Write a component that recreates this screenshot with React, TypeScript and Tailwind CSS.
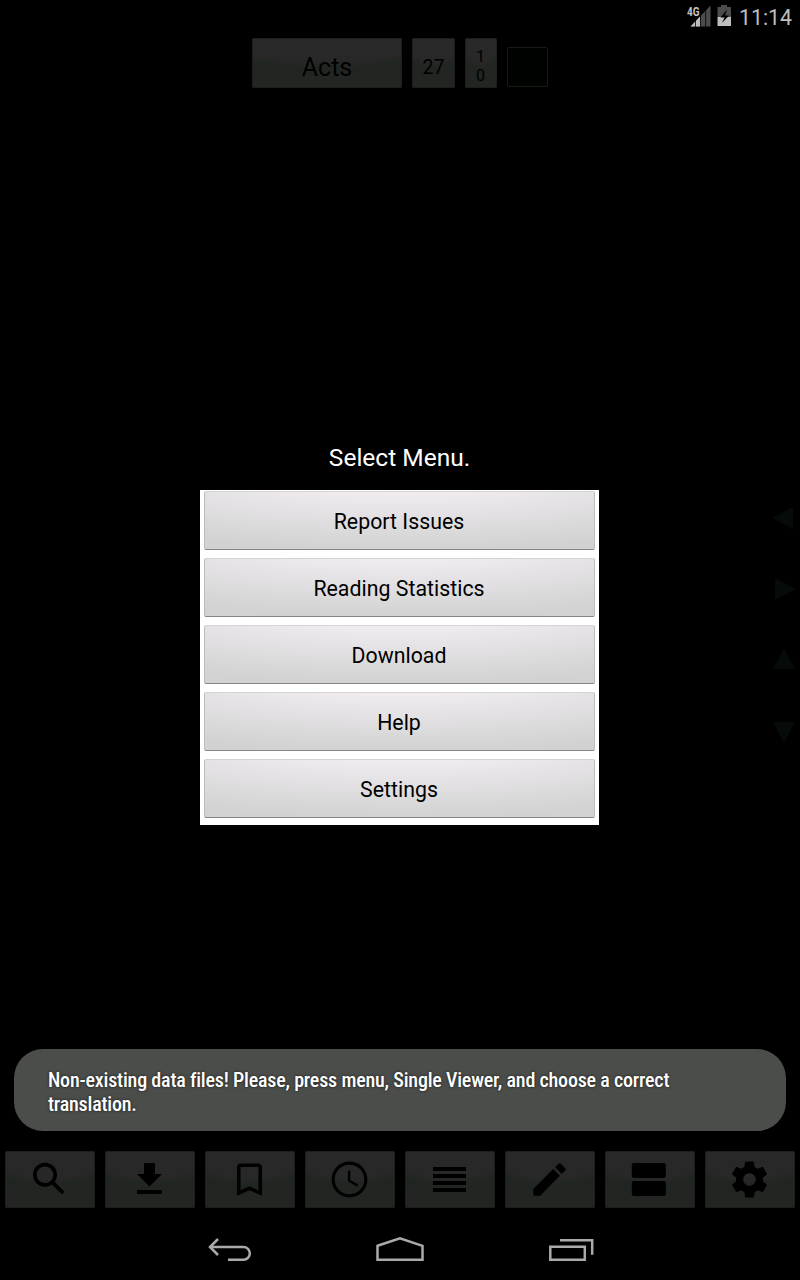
import type { ReactNode } from "react";

const menu = ["Report Issues", "Reading Statistics", "Download", "Help", "Settings"];

function DimTile({ className, children }: { className: string; children: ReactNode }) {
  return (
    <div
      className={`flex rounded-[1px] border border-[#1d1f1d] bg-[radial-gradient(ellipse_105%_100%_at_50%_-35%,#282828_0%,#282828_82%,#212621_94%,#222522_112%)] text-black ${className}`}
    >
      {children}
    </div>
  );
}

function Glyph({ d }: { d: string }) {
  return (
    <svg viewBox="0 0 24 24" className="size-[43px] fill-black">
      <path d={d} />
    </svg>
  );
}

const tools: ReactNode[] = [
  <svg viewBox="0 0 43 43" className="size-[43px]">
    <circle cx="17" cy="16.800" r="10.200" fill="none" stroke="#000" strokeWidth="3.700" />
    <path d="M24.300 24.100 35.200 35" stroke="#000" strokeWidth="3.800" />
  </svg>,
  <svg viewBox="0 0 43 43" className="size-[43px]">
    <path d="M16 5h11v11h7L21.500 28.500 9 16h7zM9 32h25v4H9z" />
  </svg>,
  <Glyph d="M17 3H7c-1.100 0-2 .9-2 2v16l7-3 7 3V5c0-1.100-.9-2-2-2zm0 15l-5-2.180L7 18V5h10v13z" />,
  <Glyph d="M11.990 2C6.470 2 2 6.480 2 12s4.470 10 9.990 10C17.520 22 22 17.520 22 12S17.520 2 11.990 2zM12 20.300c-4.600 0-8.300-3.700-8.300-8.300S7.400 3.700 12 3.700s8.300 3.700 8.300 8.300-3.700 8.300-8.300 8.300zM12.500 7H11.100v6l5.100 3 .7-1.150-4.400-2.600z" />,
  <svg viewBox="0 0 43 43" className="size-[43px]">
    <path d="M5 9h33v4H5zM5 16h33v4H5zM5 23h33v4H5zM5 30h33v4H5z" />
  </svg>,
  <Glyph d="M3 17.250V21h3.750L17.810 9.940l-3.750-3.750L3 17.250zM20.710 7.040c.39-.39.39-1.020 0-1.410l-2.340-2.340c-.39-.39-1.020-.39-1.410 0l-1.830 1.830 3.750 3.750 1.830-1.830z" />,
  <svg viewBox="0 0 43 43" className="size-[43px]">
    <rect x="3.800" y="5" width="34" height="15" rx="2" />
    <rect x="3.800" y="23" width="34" height="15" rx="2" />
  </svg>,
  <Glyph d="M19.430 12.980c.04-.32.07-.64.07-.98s-.03-.66-.07-.98l2.110-1.650c.19-.15.24-.42.12-.64l-2-3.460c-.12-.22-.39-.3-.61-.22l-2.490 1c-.52-.4-1.080-.73-1.690-.98l-.38-2.650C14.460 2.180 14.250 2 14 2h-4c-.25 0-.46.18-.49.42l-.38 2.650c-.61.25-1.170.59-1.690.98l-2.490-1c-.23-.09-.49 0-.61.22l-2 3.460c-.13.22-.07.49.12.64l2.110 1.650c-.04.32-.07.65-.07.98s.03.66.07.98l-2.110 1.650c-.19.15-.24.42-.12.64l2 3.460c.12.22.39.3.61.22l2.490-1c.52.4 1.080.73 1.690.98l.38 2.650c.03.24.24.42.49.42h4c.25 0 .46-.18.49-.42l.38-2.650c.61-.25 1.170-.59 1.690-.98l2.490 1c.23.09.49 0 .61-.22l2-3.460c.12-.22.07-.49-.12-.64l-2.110-1.650zM12 15.500c-1.930 0-3.500-1.570-3.500-3.500s1.570-3.500 3.500-3.500 3.500 1.570 3.500 3.500-1.570 3.500-3.500 3.500z" />,
];

function StatusBar() {
  return (
    <header className="flex h-[38px] justify-end pr-2 text-[#bebebe]">
      <svg viewBox="0 0 46 30" className="h-[30px] w-[46px]">
        <path d="M3.500 26.500 23.500 5.500V26.500z" fill="#4a4d4a" />
        <path d="M3.500 26.500 13 16.500V26.500z" fill="#bebebe" />
        <path d="M8.500 14V27M13.500 10V27M18.700 7V27" stroke="#000" strokeWidth="0.800" />
        <path d="M0 5h12.500v11.500H0z" fill="#000" />
        <text x="0" y="15.500" fontSize="13" fontWeight="700" textLength="12.500" lengthAdjust="spacingAndGlyphs" fill="#c4c4c4">4G</text>
        <path d="M34 5h6v2h4v10H30.500V7H34z" fill="#4a4d4a" />
        <path d="M30.500 17H44v9H30.500z" fill="#bebebe" />
        <path d="M40 9.500 33.500 17.500h4L35 23l7-7.500h-4z" fill="#000" />
      </svg>
      <span className="ml-[6px] mt-[4px] text-[21.300px] leading-[28px]">11:14</span>
    </header>
  );
}

function SystemNav() {
  return (
    <nav className="mt-auto flex h-[48px] justify-center">
      <svg viewBox="0 0 400 48" className="h-[48px] w-[400px]" fill="none" stroke="#aaa" strokeWidth="2.500">
        <path d="M10 15H43.500a6.300 6.300 0 0 1 0 12.700H28" />
        <path d="M18 7 10 15l8 8" />
        <path d="M177.500 13.800 200 6.200l22.500 7.600v13.900h-45z" />
        <path d="M350.300 14.700h34.500v13h-34.500zM360 8.200h32.200v14.500" />
      </svg>
    </nav>
  );
}

export default function App() {
  return (
    <div className="relative flex h-[1280px] w-[800px] flex-col overflow-hidden bg-black font-['Roboto',sans-serif]">
      <StatusBar />

      <div className="flex h-[50px] justify-center gap-[10px]">
        <DimTile className="w-[150px] items-center justify-center pt-[9px] text-[25px]">Acts</DimTile>
        <DimTile className="w-[43px] items-center justify-center pt-[9px] text-[19.500px]">27</DimTile>
        <DimTile className="w-[32px] flex-col items-center justify-center pt-[6px] pr-px text-[16px] leading-[19px]">
          <span>1</span>
          <span>0</span>
        </DimTile>
        <div className="mt-[9px] h-[40px] w-[41px] rounded-[2px] border border-[#171a17] bg-[#000200]" />
      </div>

      <main className="grid h-[1063px] grid-cols-[200px_399px_201px]">
        <section className="col-start-2 pt-[350px]">
          <h1 className="h-[52px] text-center text-[24.500px] leading-[39px] text-white">Select Menu.</h1>
          <div className="flex h-[335px] flex-col gap-[8px] bg-white px-[4px] pt-px">
            {menu.map((label) => (
              <button
                key={label}
                className="h-[59px] rounded-[2px] border border-x-[#bcbcbc] border-t-[#d4d4d4] border-b-[#858585] bg-[radial-gradient(ellipse_110%_150%_at_50%_-50%,#efebef_0%,#efebef_36%,#e6e3e6_56%,#dcdbdc_78%,#d3d2d3_100%)] pt-[3px] pr-px text-[21.300px] tracking-[0.020px] text-black"
              >
                {label}
              </button>
            ))}
          </div>
        </section>
        <aside className="flex flex-col pt-[419px] pl-[173px]">
          <svg viewBox="0 0 24 240" className="h-[240px] w-[24px]" fill="#060b08">
            <path d="M0 11 21 0V22zM3 71 24 82 3 93zM1 162 12 141 23 162zM1 215H23L12 236z" />
          </svg>
        </aside>
      </main>

      <footer className="flex gap-[10px] px-[5px]">
        {tools.map((icon, i) => (
          <DimTile key={i} className="h-[57px] w-[90px] items-center justify-center pr-px">
            {icon}
          </DimTile>
        ))}
      </footer>

      <SystemNav />

      <div className="absolute left-[14px] top-[1049px] h-[82px] w-[772px] rounded-[29px] bg-[#4b4d4a] px-[34px] pt-[19px] text-white">
        <p className="w-[700px] font-['Roboto_Condensed','Roboto',sans-serif] text-[20px] font-medium leading-[24px] tracking-[-0.190px] [font-stretch:75%] [text-shadow:0_0_3px_rgba(0,0,0,0.7)]">
          Non-existing data files! Please, press menu, Single Viewer, and choose a correct
          <br />
          translation.
        </p>
      </div>
    </div>
  );
}
